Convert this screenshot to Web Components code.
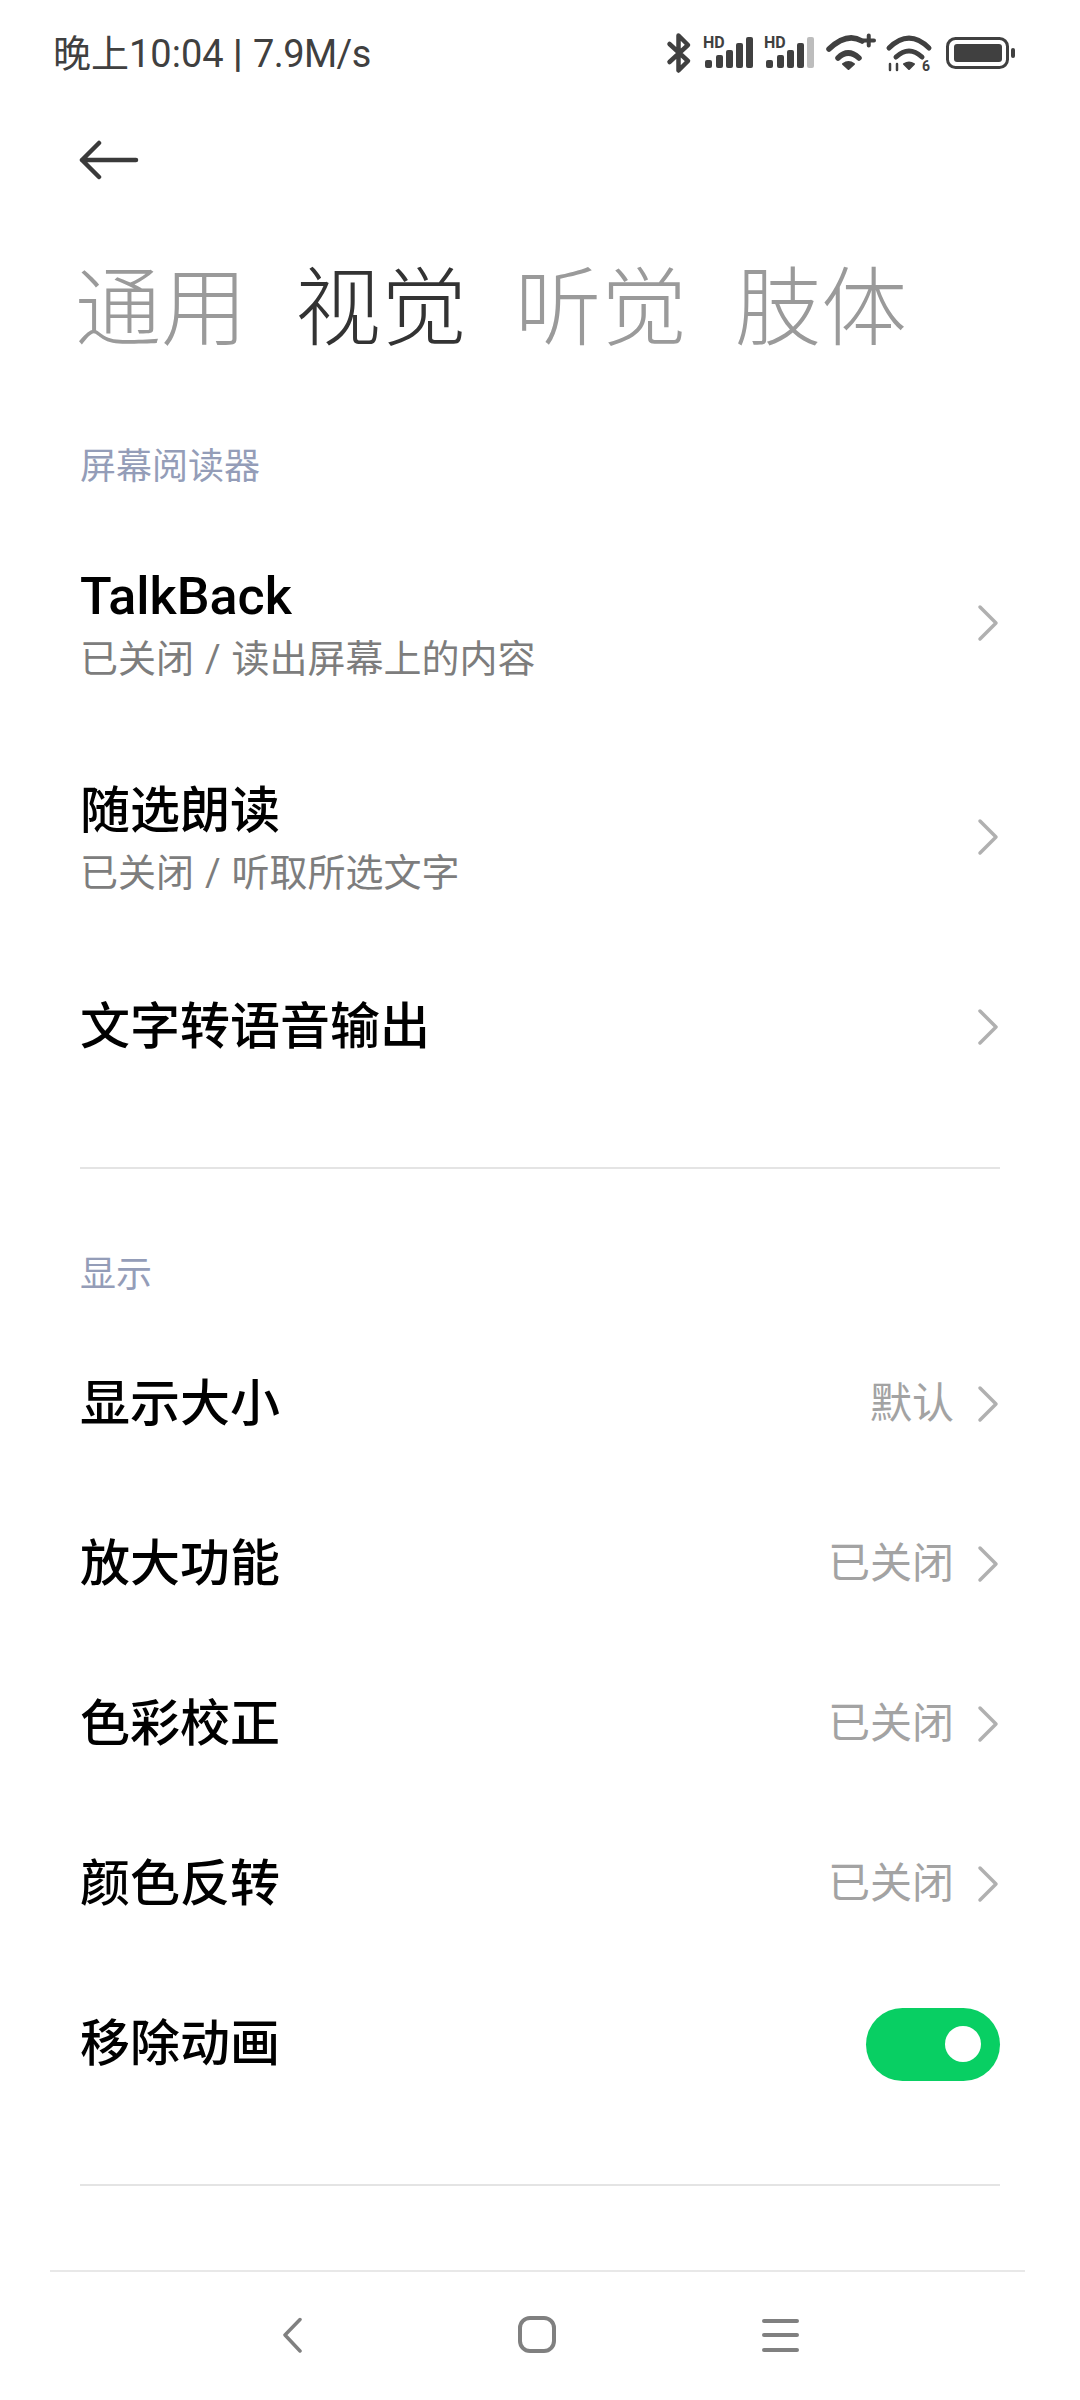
<!DOCTYPE html>
<html lang="zh">
<head>
<meta charset="utf-8">
<title>视觉</title>
<style>
  html, body { margin: 0; background: #fff; }
  body {
    width: 1080px;
    height: 2400px;
    display: flex;
    flex-direction: column;
    overflow: hidden;
    font-family: Roboto, "Noto Sans CJK SC", sans-serif;
  }
  main { flex: 1; }
</style>
</head>
<body>
<status-bar></status-bar>
<main>
  <back-header></back-header>
  <tab-strip active="1">
    <span>通用</span><span>视觉</span><span>听觉</span><span>肢体</span>
  </tab-strip>

  <section-block label="屏幕阅读器">
    <setting-row title="TalkBack" sub="已关闭 / 读出屏幕上的内容" chevron latin></setting-row>
    <setting-row title="随选朗读" sub="已关闭 / 听取所选文字" chevron></setting-row>
    <setting-row title="文字转语音输出" chevron short></setting-row>
  </section-block>

  <section-block label="显示">
    <setting-row title="显示大小" value="默认" chevron></setting-row>
    <setting-row title="放大功能" value="已关闭" chevron></setting-row>
    <setting-row title="色彩校正" value="已关闭" chevron></setting-row>
    <setting-row title="颜色反转" value="已关闭" chevron></setting-row>
    <setting-row title="移除动画"><toggle-switch slot="end"></toggle-switch></setting-row>
  </section-block>
</main>
<nav-bar></nav-bar>

<script>
class StatusBar extends HTMLElement {
  constructor() {
    super();
    const bars = (last) => `
      <text x="0" y="15" font-size="16" font-weight="700" fill="#404040" font-family="Roboto, sans-serif">HD</text>
      <g fill="#404040">
        <rect x="2" y="27" width="7" height="8" rx="2"/>
        <rect x="13" y="22" width="7" height="13" rx="2"/>
        <rect x="23" y="17" width="7" height="18" rx="2"/>
        <rect x="33" y="10" width="7" height="25" rx="2"/>
        <rect x="43" y="4" width="7" height="31" rx="2" fill="${last}"/>
      </g>`;
    this.attachShadow({ mode: "open" });
    this.shadowRoot.innerHTML = `
      <style>
        :host {
          display: flex;
          align-items: center;
          justify-content: space-between;
          height: 105px;
          padding: 0 65px 0 53px;
          color: #404040;
          font-size: 38px;
        }
        .clock { margin-bottom: 5px; }
        .sep { font-weight: 700; }
        .speed { letter-spacing: -0.6px; margin-left: 1px; }
        .icons { display: flex; align-items: center; }
        svg { display: block; overflow: visible; }
        .bt { margin-right: 12px; }
        .sig { margin-right: 11px; }
        .sig + .sig { margin-right: 12px; }
        .wifi { margin-right: 8px; }
        .wifi6 { margin-right: 14px; }
      </style>
      <span class="clock">晚上10:04 <span class="sep">|</span> <span class="speed">7.9M/s</span></span>
      <div class="icons">
        <svg class="bt" width="24" height="40" viewBox="0 0 24 40" fill="none" stroke="#404040" stroke-width="4.5" stroke-linecap="round" stroke-linejoin="round">
          <path d="M2.5 11 L21 28 L11.5 37.5 V2.5 L21 12 L2.5 29"/>
        </svg>
        <svg class="sig" width="50" height="40" viewBox="0 0 50 40">${bars("#404040")}</svg>
        <svg class="sig" width="50" height="40" viewBox="0 0 50 40">${bars("#bdbdbd")}</svg>
        <svg class="wifi" width="52" height="40" viewBox="0 0 52 40" fill="none" stroke="#404040" stroke-width="5.5" stroke-linecap="round">
          <path d="M3 16 Q21 -1 36 8"/>
          <path d="M12 25 Q22 15 33 25"/>
          <path d="M17 31 Q22.5 27 28 31 L22.5 36 Z" fill="#404040" stroke-width="2" stroke-linejoin="round"/>
          <path d="M37.5 7.5 H48 M42.75 2.5 V12.5" stroke-width="4"/>
        </svg>
        <svg class="wifi6" width="46" height="40" viewBox="0 0 46 40" fill="none" stroke="#404040" stroke-width="5" stroke-linecap="round">
          <path d="M3 15 Q23 -5 43 15"/>
          <path d="M10 24 Q23 12 36 24"/>
          <path d="M18 31 Q23 28 28 31 L23 36 Z" fill="#404040" stroke-width="2" stroke-linejoin="round"/>
          <path d="M4 31 V37 M11 31 V37" stroke-width="2.5"/>
          <text x="36" y="38" font-size="14" font-weight="700" fill="#404040" stroke="none" font-family="Roboto, sans-serif">6</text>
        </svg>
        <svg width="69" height="32" viewBox="0 0 69 32">
          <rect x="1.5" y="1.5" width="60" height="29" rx="8" fill="none" stroke="#404040" stroke-width="3"/>
          <rect x="8" y="7" width="48" height="18" rx="3" fill="#404040"/>
          <rect x="65" y="11" width="4" height="10" rx="2" fill="#404040"/>
        </svg>
      </div>`;
  }
}
customElements.define("status-bar", StatusBar);

class BackHeader extends HTMLElement {
  constructor() {
    super();
    this.attachShadow({ mode: "open" });
    this.shadowRoot.innerHTML = `
      <style>
        :host { display: block; box-sizing: border-box; height: 90px; padding: 35px 0 0 78px; }
        svg { display: block; }
      </style>
      <svg width="62" height="40" viewBox="0 0 62 40" fill="none" stroke="#3a3a3a" stroke-width="4.5" stroke-linecap="round" stroke-linejoin="round">
        <path d="M21 3 L4 20 L21 37 M4 20 H58"/>
      </svg>`;
  }
}
customElements.define("back-header", BackHeader);

class TabStrip extends HTMLElement {
  constructor() {
    super();
    this.attachShadow({ mode: "open" });
    this.shadowRoot.innerHTML = `
      <style>
        :host {
          display: flex;
          gap: 48px;
          padding: 60px 0 0 75px;
          height: 106px;
          font-size: 86px;
          line-height: 110px;
          font-weight: 300;
          color: #9a9a9a;
        }
        ::slotted(.on) { color: #333; }
      </style>
      <slot></slot>`;
  }
  connectedCallback() {
    const tabs = this.querySelectorAll("span");
    const active = Number(this.getAttribute("active"));
    tabs.forEach((t, i) => t.classList.toggle("on", i === active));
  }
}
customElements.define("tab-strip", TabStrip);

class SectionBlock extends HTMLElement {
  constructor() {
    super();
    this.attachShadow({ mode: "open" });
    this.shadowRoot.innerHTML = `
      <style>
        :host { display: block; margin: 0 80px; border-bottom: 2px solid #e4e4e4; }
        .label {
          font-size: 36px;
          line-height: 48px;
          color: #949db8;
          padding: 82px 0 25px;
        }
        .list { padding-bottom: 60px; }
      </style>
      <div class="label"></div>
      <div class="list"><slot></slot></div>`;
  }
  connectedCallback() {
    this.shadowRoot.querySelector(".label").textContent = this.getAttribute("label");
  }
}
customElements.define("section-block", SectionBlock);

class SettingRow extends HTMLElement {
  constructor() {
    super();
    this.attachShadow({ mode: "open" });
    this.shadowRoot.innerHTML = `
      <style>
        :host {
          display: flex;
          align-items: center;
          justify-content: space-between;
          height: 160px;
        }
        :host([sub]) { height: 214px; }
        :host([sub]) .text { padding-top: 3px; }
        :host([short]) { margin-top: 3px; }
        .title { font-size: 50px; line-height: 64px; font-weight: 500; color: #000; }
        :host([latin]) .title { font-size: 52px; }
        .sub { font-size: 38px; line-height: 50px; margin-top: 5px; color: #7d7d7d; word-spacing: 1.5px; }
        .end { display: flex; align-items: center; gap: 22px; }
        .value { font-size: 42px; line-height: 50px; margin-bottom: 1px; color: #a3a3a3; }
        svg { display: block; }
        [hidden] { display: none; }
      </style>
      <div class="text">
        <div class="title"></div>
        <div class="sub" hidden></div>
      </div>
      <div class="end">
        <span class="value" hidden></span>
        <svg class="chev" hidden width="24" height="42" viewBox="0 0 24 42" fill="none" stroke="#b0b0b0" stroke-width="3.5" stroke-linecap="round" stroke-linejoin="round">
          <path d="M4 5 L20 21 L4 37"/>
        </svg>
        <slot name="end"></slot>
      </div>`;
  }
  connectedCallback() {
    const root = this.shadowRoot;
    root.querySelector(".title").textContent = this.getAttribute("title");
    this.removeAttribute("title");
    if (this.hasAttribute("sub")) {
      const el = root.querySelector(".sub");
      el.textContent = this.getAttribute("sub");
      el.hidden = false;
    }
    if (this.hasAttribute("value")) {
      const el = root.querySelector(".value");
      el.textContent = this.getAttribute("value");
      el.hidden = false;
    }
    root.querySelector(".chev").toggleAttribute("hidden", !this.hasAttribute("chevron"));
  }
}
customElements.define("setting-row", SettingRow);

class ToggleSwitch extends HTMLElement {
  constructor() {
    super();
    this.attachShadow({ mode: "open" });
    this.shadowRoot.innerHTML = `
      <style>
        :host {
          display: flex;
          align-items: center;
          justify-content: flex-end;
          box-sizing: border-box;
          width: 134px;
          height: 73px;
          padding-right: 19px;
          border-radius: 37px;
          background: #08cf63;
        }
        .knob { width: 36px; height: 36px; border-radius: 50%; background: #fff; }
      </style>
      <div class="knob"></div>`;
  }
}
customElements.define("toggle-switch", ToggleSwitch);

class NavBar extends HTMLElement {
  constructor() {
    super();
    this.attachShadow({ mode: "open" });
    this.shadowRoot.innerHTML = `
      <style>
        :host {
          display: block;
          margin: 0 55px 0 50px;
          height: 128px;
          border-top: 2px solid #e8e8e8;
        }
        .icons { display: flex; align-items: center; padding: 44px 0 0 233px; }
        svg { display: block; }
        .home { margin-left: 216px; }
        .menu { margin-left: 206px; }
      </style>
      <div class="icons">
        <svg width="19" height="37" viewBox="0 0 19 37" fill="none" stroke="#808080" stroke-width="3.5" stroke-linecap="round" stroke-linejoin="round">
          <path d="M17 3.5 L2 19 L17 35"/>
        </svg>
        <svg class="home" width="38" height="37" viewBox="0 0 38 37" fill="none" stroke="#808080" stroke-width="4">
          <rect x="2" y="2" width="34" height="33" rx="10"/>
        </svg>
        <svg class="menu" width="37" height="37" viewBox="0 0 37 37" fill="none" stroke="#808080" stroke-width="4" stroke-linecap="round">
          <path d="M2 5 H35 M2 19 H35 M2 34 H35"/>
        </svg>
      </div>`;
  }
}
customElements.define("nav-bar", NavBar);
</script>
</body>
</html>
